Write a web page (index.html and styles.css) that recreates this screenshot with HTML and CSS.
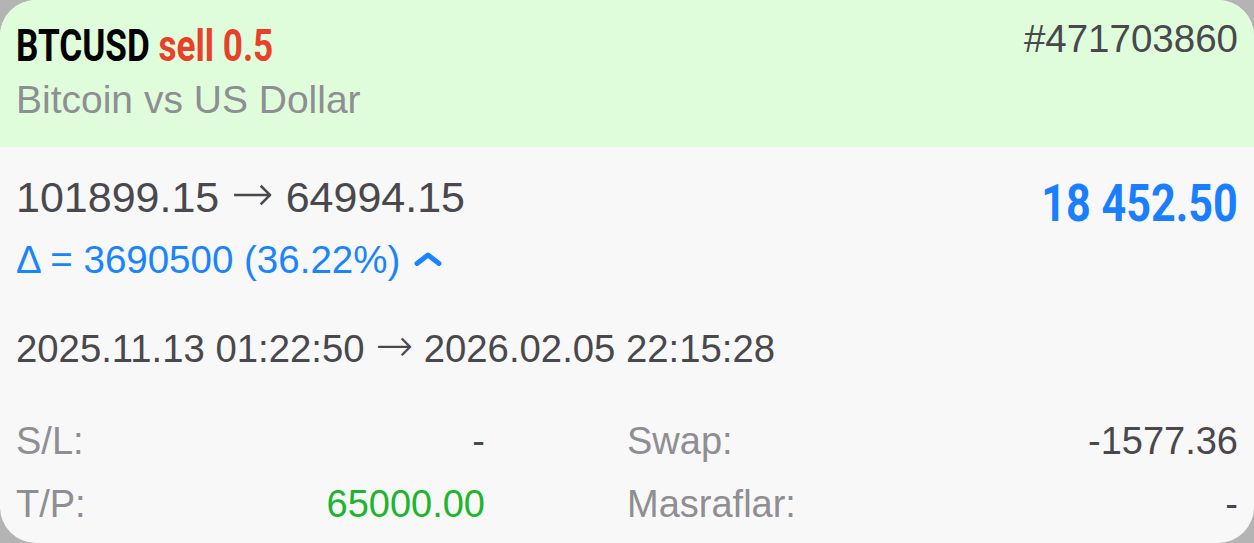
FILE: index.html
```html
<!DOCTYPE html>
<html lang="tr">
<head>
  <meta charset="UTF-8">
  <meta name="viewport" content="width=device-width, initial-scale=1.0">
  <title>BTCUSD pozisyon</title>
  <link rel="stylesheet" href="styles.css">
</head>
<body>
  <div class="card">
    <header class="head">
      <div class="symbol-box">
        <div class="symbol">BTCUSD <span class="sell">sell 0.5</span></div>
        <div class="desc">Bitcoin vs US Dollar</div>
      </div>
      <div class="ticket">#471703860</div>
    </header>

    <section class="content">
      <div class="top-row">
        <div class="prices">
          <div class="price-line">101899.15 <span class="arrow">&rarr;</span> 64994.15</div>
          <div class="delta">
            <span>&Delta; = 3690500 (36.22%)</span>
            <svg class="chevron" width="28" height="14" viewBox="0 0 28 14">
              <polyline points="3,11.5 14,3 25,11.5" fill="none" stroke="currentColor" stroke-width="5" stroke-linecap="round" stroke-linejoin="round"/>
            </svg>
          </div>
        </div>
        <div class="profit">18 452.50</div>
      </div>

      <div class="times">2025.11.13 01:22:50 <span class="arrow">&rarr;</span> 2026.02.05 22:15:28</div>

      <!-- S/L, T/P, swap ve masraflar -->
      <div class="details">
        <div class="cell left"><span class="label">S/L:</span><span class="value">-</span></div>
        <div class="cell"><span class="label">Swap:</span><span class="value">-1577.36</span></div>
        <div class="cell left"><span class="label">T/P:</span><span class="value green">65000.00</span></div>
        <div class="cell"><span class="label">Masraflar:</span><span class="value">-</span></div>
      </div>
    </section>
  </div>
</body>
</html>
```

FILE: styles.css
```css
body {
  margin: 0;
  background-color: #b4b4b4;
  font-family: "Liberation Sans", Arial, sans-serif;
}

.card {
  height: 543px;
  border-radius: 36px;
  overflow: hidden;
  background-color: #f8f8f8;
}

/* Bölüm başlığı */
.head {
  height: 147px;
  box-sizing: border-box;
  padding: 19px 16px 0 16px;
  background-color: #dffddb;
  display: flex;
  justify-content: space-between;
}

/* dar yazı tipi yok, Roboto'yu yatayda sıkıştırıyoruz */
.symbol {
  display: inline-block;
  font-family: Roboto, sans-serif;
  font-weight: bold;
  font-size: 45px;
  line-height: 54px;
  color: #000;
  transform: scaleX(0.78);
  transform-origin: left center;
  white-space: nowrap;
}

.sell { color: #e8402b; }

.desc {
  font-size: 39px;
  line-height: 54px;
  color: #8e8e93;
}

.ticket {
  font-size: 38.5px;
  line-height: 40px;
  color: #48484d;
}

/* Fiyatlar */
.content {
  padding: 25px 16px 0 16px;
}

.top-row {
  display: flex;
  justify-content: space-between;
  align-items: flex-start;
}

.price-line {
  font-size: 43px;
  line-height: 50px;
  color: #48484d;
}

/* ince ve uzun ok */
.arrow {
  font-family: "DejaVu Sans", sans-serif;
  font-weight: 200;
  font-size: 1.18em;
  line-height: 0;
  vertical-align: 1px;
}

.delta {
  margin-top: 16px;
  font-size: 38.5px;
  line-height: 44px;
  color: #1a84ff;
  display: flex;
  align-items: center;
  gap: 14px;
}

.chevron { margin-top: -2px; }

.profit {
  font-family: Roboto, sans-serif;
  font-weight: bold;
  font-size: 52px;
  line-height: 64px;
  color: #1a7fff;
  transform: scaleX(0.83);
  transform-origin: right center;
  white-space: nowrap;
}

.times {
  margin-top: 45px;
  font-size: 38.3px;
  line-height: 44px;
  color: #48484d;
}

/* Alt tablo */
.details {
  margin-top: 48px;
  display: grid;
  grid-template-columns: 1fr 1fr;
  row-gap: 19px;
}

.cell {
  display: flex;
  justify-content: space-between;
  font-size: 38px;
  line-height: 44px;
}

.cell.left { padding-right: 142px; }

.label { color: #8e8e93; }
.value { color: #48484d; }
.value.green { color: #1db52d; }
```
